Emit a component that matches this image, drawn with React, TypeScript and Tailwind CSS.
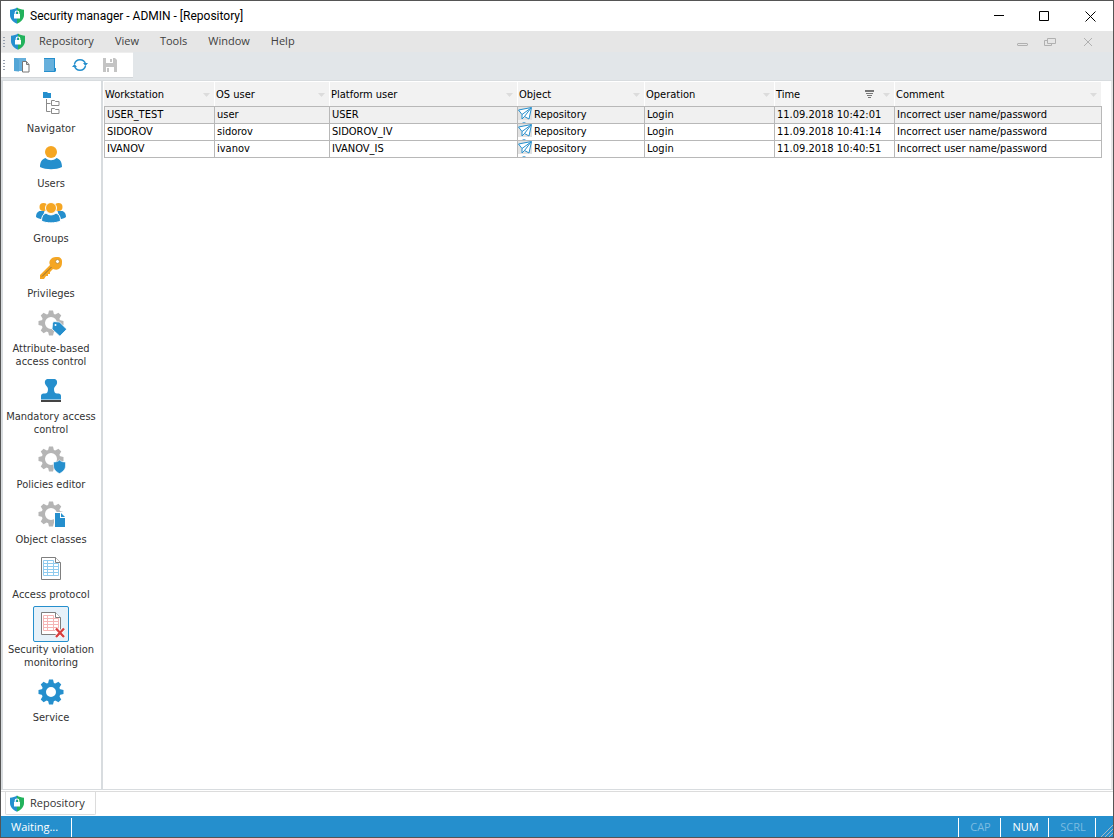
import { ReactNode } from "react";

const BLUE = "#258fcd";
const ORANGE = "#f5a623";
const GRAY = "#b5b5b5";

const Shield = () => (
  <svg width="16" height="17" viewBox="0 0 16 17" className="shrink-0">
    <path d="M8 0.500C6 2 3.500 2.600 1 2.700V8c0 4 3 7 7 8.700z" fill="#2490cf" />
    <path d="M8 0.500c2 1.500 4.500 2.100 7 2.200V8c0 4-3 7-7 8.700z" fill="#22b25c" />
    <rect x="5" y="7" width="6" height="4.500" fill="#fff" />
    <path d="M6.200 7.500V5.800a1.800 1.800 0 0 1 3.600 0v1.700" fill="none" stroke="#fff" strokeWidth="1.200" />
  </svg>
);

const IconBox = ({ children }: { children: ReactNode }) => (
  <svg width="36" height="36" viewBox="0 0 36 36" fill="none">
    {children}
  </svg>
);

const Gear = ({ color, hole }: { color: string; hole: number }) => (
  <>
    <circle cx="18" cy="18" r={(9.5 + hole) / 2} stroke={color} strokeWidth={9.5 - hole} />
    {[0, 45, 90, 135, 180, 225, 270, 315].map((angle) => (
      <path
        key={angle}
        d="M15 9.500l1-4h4l1 4z"
        fill={color}
        transform={`rotate(${angle} 18 18)`}
      />
    ))}
  </>
);

const Sheet = ({ color }: { color: string }) => (
  <>
    <path d="M8.500 6.500h14l5 5v17h-19z" fill="#fff" stroke="#7f7f7f" />
    <path
      d="M10.500 9.500h10v3h5v12h-15zM10.500 12.500h10M10.500 15.500h15M10.500 18.500h15M10.500 21.500h15M14.500 9.500v15M20.500 12.500v12"
      stroke={color}
    />
    <path d="M22.500 6.500v5h5" fill="#fff" stroke="#7f7f7f" />
  </>
);

const NavigatorIcon = () => (
  <IconBox>
    <path d="M10 7h4l1 1h3v5h-8z" fill={BLUE} />
    <path
      d="M13.500 14v12.500h4M13.500 18.500h4M18.500 20.500v-5h3l1 1h3.500v4zM18.500 28.500v-5h3l1 1h3.500v4z"
      stroke="#8a8a8a"
    />
  </IconBox>
);

const UsersIcon = () => (
  <IconBox>
    <path d="M7 27c0-5 2-8 5.500-9 3 3 8 3 11 0C27 19 29 22 29 27c-6 3-16 3-22 0z" fill={BLUE} />
    <circle cx="18" cy="12" r="6" fill={ORANGE} />
  </IconBox>
);

const GroupsIcon = () => (
  <IconBox>
    <path d="M3 22c0-3 1-5 3.500-6h5L9 24c-2 0-4-.5-6-2zM33 22c0-3-1-5-3.500-6h-5L27 24c2 0 4-.5 6-2z" fill={BLUE} />
    <circle cx="10.500" cy="12" r="4" fill={ORANGE} />
    <circle cx="25.500" cy="12" r="4" fill={ORANGE} />
    <path
      d="M8.500 26c0-4.500 1.500-7 4.500-8 3 2.500 7 2.500 10 0 3 1 4.500 3.500 4.500 8-5 2.500-14 2.500-19 0z"
      fill={BLUE}
      stroke="#fff"
    />
    <circle cx="18" cy="13" r="5.500" fill={ORANGE} stroke="#fff" />
  </IconBox>
);

const KeyIcon = () => (
  <IconBox>
    <path
      d="M18 9c2-2 4-2 7-2 2 0 4 2 4 4 0 3 0 5-2 7-2 2-4 2-7 1l-3 3v2h-2v2h-2l-2 3H7v-4l10-10c-1-2-1-4 1-6z"
      fill={ORANGE}
    />
    <circle cx="24.500" cy="11.500" r="2" fill="#fff" stroke="#b98a35" strokeWidth="0.800" />
    <path d="M9 26.500l9.500-9.500" stroke="#8d7138" />
  </IconBox>
);

const AttributeIcon = () => (
  <IconBox>
    <Gear color={GRAY} hole={6} />
    <path
      d="M19.500 18.500l1-2 6 .5 6.500 6.500c.5.500.5 1 0 1.500L27.500 30.500c-.5.500-1 .5-1.500 0L19 24z"
      fill={BLUE}
      stroke="#fff"
      strokeWidth="0.800"
    />
    <circle cx="22.500" cy="20" r="1" fill="#fff" />
  </IconBox>
);

const StampIcon = () => (
  <IconBox>
    <path
      d="M15.500 6h5c3 0 4 2 3.500 4.500-.5 2.500-3 3-3 5.500 0 3 1 4.500 3 4.500h1.500c1.500 0 2.500 1 2.500 2.500v3.500H8V23c0-1.500 1-2.500 2.500-2.500H12c2 0 3-1.500 3-4.500 0-2.500-2.500-3-3-5.500C11.500 8 12.500 6 15.500 6z"
      fill={BLUE}
    />
    <rect x="8" y="27" width="20" height="2" fill="#444" />
  </IconBox>
);

const PoliciesIcon = () => (
  <IconBox>
    <Gear color={GRAY} hole={6} />
    <path
      d="M26.500 19c1.500 1.500 3.500 2 6 2V25c0 3.500-3 6-6 7.500-3-1.500-6-4-6-7.500v-4c2.500 0 4.500-.5 6-2z"
      fill={BLUE}
      stroke="#fff"
      strokeWidth="0.600"
    />
  </IconBox>
);

const ClassesIcon = () => (
  <IconBox>
    <Gear color={GRAY} hole={6} />
    <rect x="21" y="16" width="12" height="16" fill="#fff" />
    <path d="M22 17h5v5h5v9H22z" fill={BLUE} />
    <path d="M28 17v4h4z" fill={BLUE} />
  </IconBox>
);

const ProtocolIcon = () => (
  <IconBox>
    <Sheet color="#8fcbee" />
  </IconBox>
);

const ViolationIcon = () => (
  <IconBox>
    <Sheet color="#f5b5b5" />
    <path d="M23 22.500l8 8.500M31 22.500l-8 8.500" stroke="#fff" strokeWidth="4" />
    <path d="M23 22.500l8 8.500M31 22.500l-8 8.500" stroke="#d84040" strokeWidth="2.400" />
  </IconBox>
);

const ServiceIcon = () => (
  <IconBox>
    <Gear color={BLUE} hole={5} />
  </IconBox>
);

const PlaneIcon = () => (
  <svg width="14" height="16" viewBox="0 0 14 16" fill="none" className="shrink-0">
    <rect width="14" height="13" fill="#e2e2e2" />
    <path d="M.5 3L13.500.500 11 12 6.500 9.500 4 12V7.500z" fill="#fff" stroke={BLUE} />
    <path d="M13 1L4 7.500M13 1L6.500 9.500" stroke={BLUE} />
    <path d="M4 16c1-1 3-1 4 0z" fill={BLUE} />
  </svg>
);

const Grip = () => (
  <div className="flex w-1 flex-col gap-0.5">
    <div className="h-px w-0.5 bg-gray-400" />
    <div className="h-px w-0.5 bg-gray-400" />
    <div className="h-px w-0.5 bg-gray-400" />
    <div className="h-px w-0.5 bg-gray-400" />
  </div>
);

const navItems = [
  { label: "Navigator", icon: <NavigatorIcon /> },
  { label: "Users", icon: <UsersIcon /> },
  { label: "Groups", icon: <GroupsIcon /> },
  { label: "Privileges", icon: <KeyIcon /> },
  { label: "Attribute-based access control", icon: <AttributeIcon /> },
  { label: "Mandatory access control", icon: <StampIcon /> },
  { label: "Policies editor", icon: <PoliciesIcon /> },
  { label: "Object classes", icon: <ClassesIcon /> },
  { label: "Access protocol", icon: <ProtocolIcon /> },
  { label: "Security violation monitoring", icon: <ViolationIcon />, active: true },
  { label: "Service", icon: <ServiceIcon /> },
];

const columns = [
  { title: "Workstation", width: "w-[111px]" },
  { title: "OS user", width: "w-[115px]" },
  { title: "Platform user", width: "w-[188px]" },
  { title: "Object", width: "w-[127px]" },
  { title: "Operation", width: "w-[130px]" },
  { title: "Time", width: "w-[120px]", sorted: true },
  { title: "Comment", width: "" },
];

const rows = [
  ["USER_TEST", "user", "USER", "Repository", "Login", "11.09.2018 10:42:01", "Incorrect user name/password"],
  ["SIDOROV", "sidorov", "SIDOROV_IV", "Repository", "Login", "11.09.2018 10:41:14", "Incorrect user name/password"],
  ["IVANOV", "ivanov", "IVANOV_IS", "Repository", "Login", "11.09.2018 10:40:51", "Incorrect user name/password"],
];

const TitleBar = () => (
  <header className="flex h-[30px] shrink-0 items-center bg-white pl-2">
    <div className="-mt-0.5">
      <Shield />
    </div>
    <h1 className="ml-[5px] flex-1 font-[Roboto,sans-serif] text-[12px] text-black">
      Security manager - ADMIN - [Repository]
    </h1>
    <button aria-label="Minimize" className="flex h-full w-[45px] items-center justify-center">
      <svg width="11" height="11" stroke="#000"><path d="M0 4.500h10" /></svg>
    </button>
    <button aria-label="Maximize" className="flex h-full w-[45px] items-center justify-center">
      <svg width="11" height="11" fill="none" stroke="#000"><path d="M.5.500h9v9h-9z" /></svg>
    </button>
    <button aria-label="Close" className="flex h-full w-[46px] items-center justify-center">
      <svg width="11" height="11" stroke="#000"><path d="M.5.500l10 10M10.500.500l-10 10" /></svg>
    </button>
  </header>
);

const MenuBar = () => (
  <nav className="flex h-[21px] shrink-0 items-center bg-[#e6e6e6] pl-0.5 font-['Open_Sans',sans-serif] text-[11px] text-[#404040]">
    <Grip />
    <div className="ml-[3px]">
      <Shield />
    </div>
    <div className="ml-[13px] flex flex-1 gap-[21px]">
      {["Repository", "View", "Tools", "Window", "Help"].map((item) => (
        <button key={item}>{item}</button>
      ))}
    </div>
    <button aria-label="Minimize document" className="mr-4">
      <svg width="11" height="12" fill="none" stroke="#b0b0b0"><path d="M1 7.500h9M1 9.500h9M.5 7.500v2M10.500 7.500v2" /></svg>
    </button>
    <button aria-label="Restore document" className="mr-[27px]">
      <svg width="12" height="12" fill="none" stroke="#b0b0b0"><path d="M3.500 2.500h8v5h-8zM3.500 4.500h-3v5h7v-2" /></svg>
    </button>
    <button aria-label="Close document" className="mr-5">
      <svg width="10" height="10" stroke="#b0b0b0"><path d="M1 1l8 8M9 1l-8 8" /></svg>
    </button>
  </nav>
);

const ToolBar = () => (
  <div className="flex h-[28px] shrink-0 items-start bg-[#e2e6e9]">
    <div className="flex h-[26px] items-center border-t border-b border-t-[#eeeeee] border-b-[#d3d6d9] bg-white pr-4 pl-0.5">
      <Grip />
      <button aria-label="Open repository" className="ml-[7px]">
        <svg width="16" height="16" fill="none">
          <path d="M0 1h12v13H0z" fill="#67b0dc" />
          <path d="M0 1h2l3 2v12l-5-1z" fill="#3f9bd2" opacity=".5" />
          <path d="M8.500 4.500h4l2.500 3v7.500H8.500z" fill="#fff" stroke="#777" />
          <path d="M12.500 4.500v3h2.500" stroke="#777" />
        </svg>
      </button>
      <button aria-label="Close repository" className="ml-[14px]">
        <svg width="13" height="16">
          <path d="M0 1h11v10h1v3l-1 1H0z" fill="#258fcd" />
          <path d="M0 2h10v12H0z" fill="#67b0dc" />
        </svg>
      </button>
      <button aria-label="Refresh" className="ml-[15px]">
        <svg width="16" height="16" fill="none" stroke={BLUE} strokeWidth="1.500">
          <path d="M2.500 7A5.700 5.700 0 0 1 13.500 7M13.500 9A5.700 5.700 0 0 1 2.500 9" />
          <path d="M11 6h5l-2.500 3zM0 10h5L2.500 7z" fill={BLUE} stroke="none" />
        </svg>
      </button>
      <button aria-label="Save" disabled className="ml-[15px]">
        <svg width="14" height="16">
          <path d="M0 1h12l2 2v12H0z" fill="#c4c4c4" />
          <path d="M3 1h7v5H3zM3 10h8v5H3z" fill="#fff" />
          <path d="M7 2h2v3H7zM4 11h2v4H4z" fill="#c4c4c4" />
        </svg>
      </button>
    </div>
  </div>
);

const SideBar = () => (
  <aside className="flex w-[98px] shrink-0 flex-col gap-[5px] bg-white pt-1 pr-0.5">
    {navItems.map((item) => (
      <button key={item.label} className="flex flex-col items-center text-[#333333]">
        <span
          className={
            item.active
              ? "rounded-xs bg-[#e6f1f9] outline-1 -outline-offset-1 outline-[#258fcd]"
              : ""
          }
        >
          {item.icon}
        </span>
        <span className="mt-px text-[11px] leading-[13px]">{item.label}</span>
      </button>
    ))}
  </aside>
);

const LogTable = () => (
  <table className="w-full table-fixed border-separate border-spacing-0 text-left text-[11px] leading-4 text-black">
    <thead>
      <tr className="h-6">
        {columns.map((column) => (
          <th key={column.title} className={`border-r border-white bg-[#f2f2f2] p-0 pt-px pl-px font-normal ${column.width}`}>
            <div className="flex items-center pr-1">
              <span className="flex-1">{column.title}</span>
              {column.sorted && (
                <svg width="10" height="9" className="mr-2" stroke="#777" fill="none">
                  <path d="M0 .5h9M0 1.500h9M1 3.500h7M2 5.500h5M3 7.500h3" />
                </svg>
              )}
              <svg width="7" height="4" fill="#dcdcdc"><path d="M0 0h7L3.500 4z" /></svg>
            </div>
          </th>
        ))}
      </tr>
    </thead>
    <tbody>
      {rows.map((row, i) => (
        <tr key={row[0]} className={i === 0 ? "bg-[#f0f0f0]" : "bg-white"}>
          {row.map((cell, j) => (
            <td
              key={j}
              className="overflow-hidden border-r border-b border-[#b8b8b8] p-0 whitespace-nowrap first:border-l in-[tr:first-child]:border-t"
            >
              {j === 3 ? (
                <div className="flex h-4 items-center gap-0.5">
                  <PlaneIcon />
                  {cell}
                </div>
              ) : (
                <div className="h-4 pl-0.5">{cell}</div>
              )}
            </td>
          ))}
        </tr>
      ))}
    </tbody>
  </table>
);

const StatusBar = () => (
  <footer className="flex h-[21px] shrink-0 items-stretch bg-[#258fcd] pt-0.5 font-['Open_Sans',sans-serif] text-[11px] leading-[18px] text-white">
    <div className="w-[71px] border-r border-white pl-2.5">Waiting...</div>
    <div className="flex-1" />
    <div className="w-[43px] border-x border-white pl-0.5 text-center text-[#7cbce1]">CAP</div>
    <div className="w-12 border-r border-white pl-0.5 text-center">NUM</div>
    <div className="w-[47px] border-r border-white pl-0.5 text-center text-[#7cbce1]">SCRL</div>
    <div className="flex w-[17px] items-end justify-end">
      <svg width="12" height="12" stroke="#a9b8c2"><path d="M0 12L12 0M4 12l8-8M8 12l4-4" /></svg>
    </div>
  </footer>
);

const App = () => {
  return (
    <div className="flex min-h-screen flex-col border border-[#555555] bg-white font-['DejaVu_Sans_Condensed','DejaVu_Sans',sans-serif]">
      <TitleBar />
      <MenuBar />
      <ToolBar />
      <main className="flex flex-1 gap-0.5 border border-x-2 border-[#d8dcdf] border-r-[#e6e6e6] bg-[#d8dcdf]">
        <SideBar />
        <section className="flex-1 bg-white pt-px pr-[9px] pl-px">
          <LogTable />
        </section>
      </main>
      {/* document tabs */}
      <div className="mt-px flex h-[25px] shrink-0 border-t border-[#dcdcdc] bg-white pl-1">
        <button className="flex h-[23px] items-center rounded-b-xs border-x border-b border-[#dcdcdc] pr-2.5 pl-[3px] font-['Open_Sans',sans-serif] text-[11px] text-[#333333]">
          <Shield />
          <span className="ml-[5px]">Repository</span>
        </button>
      </div>
      <StatusBar />
    </div>
  );
};

export default App;
